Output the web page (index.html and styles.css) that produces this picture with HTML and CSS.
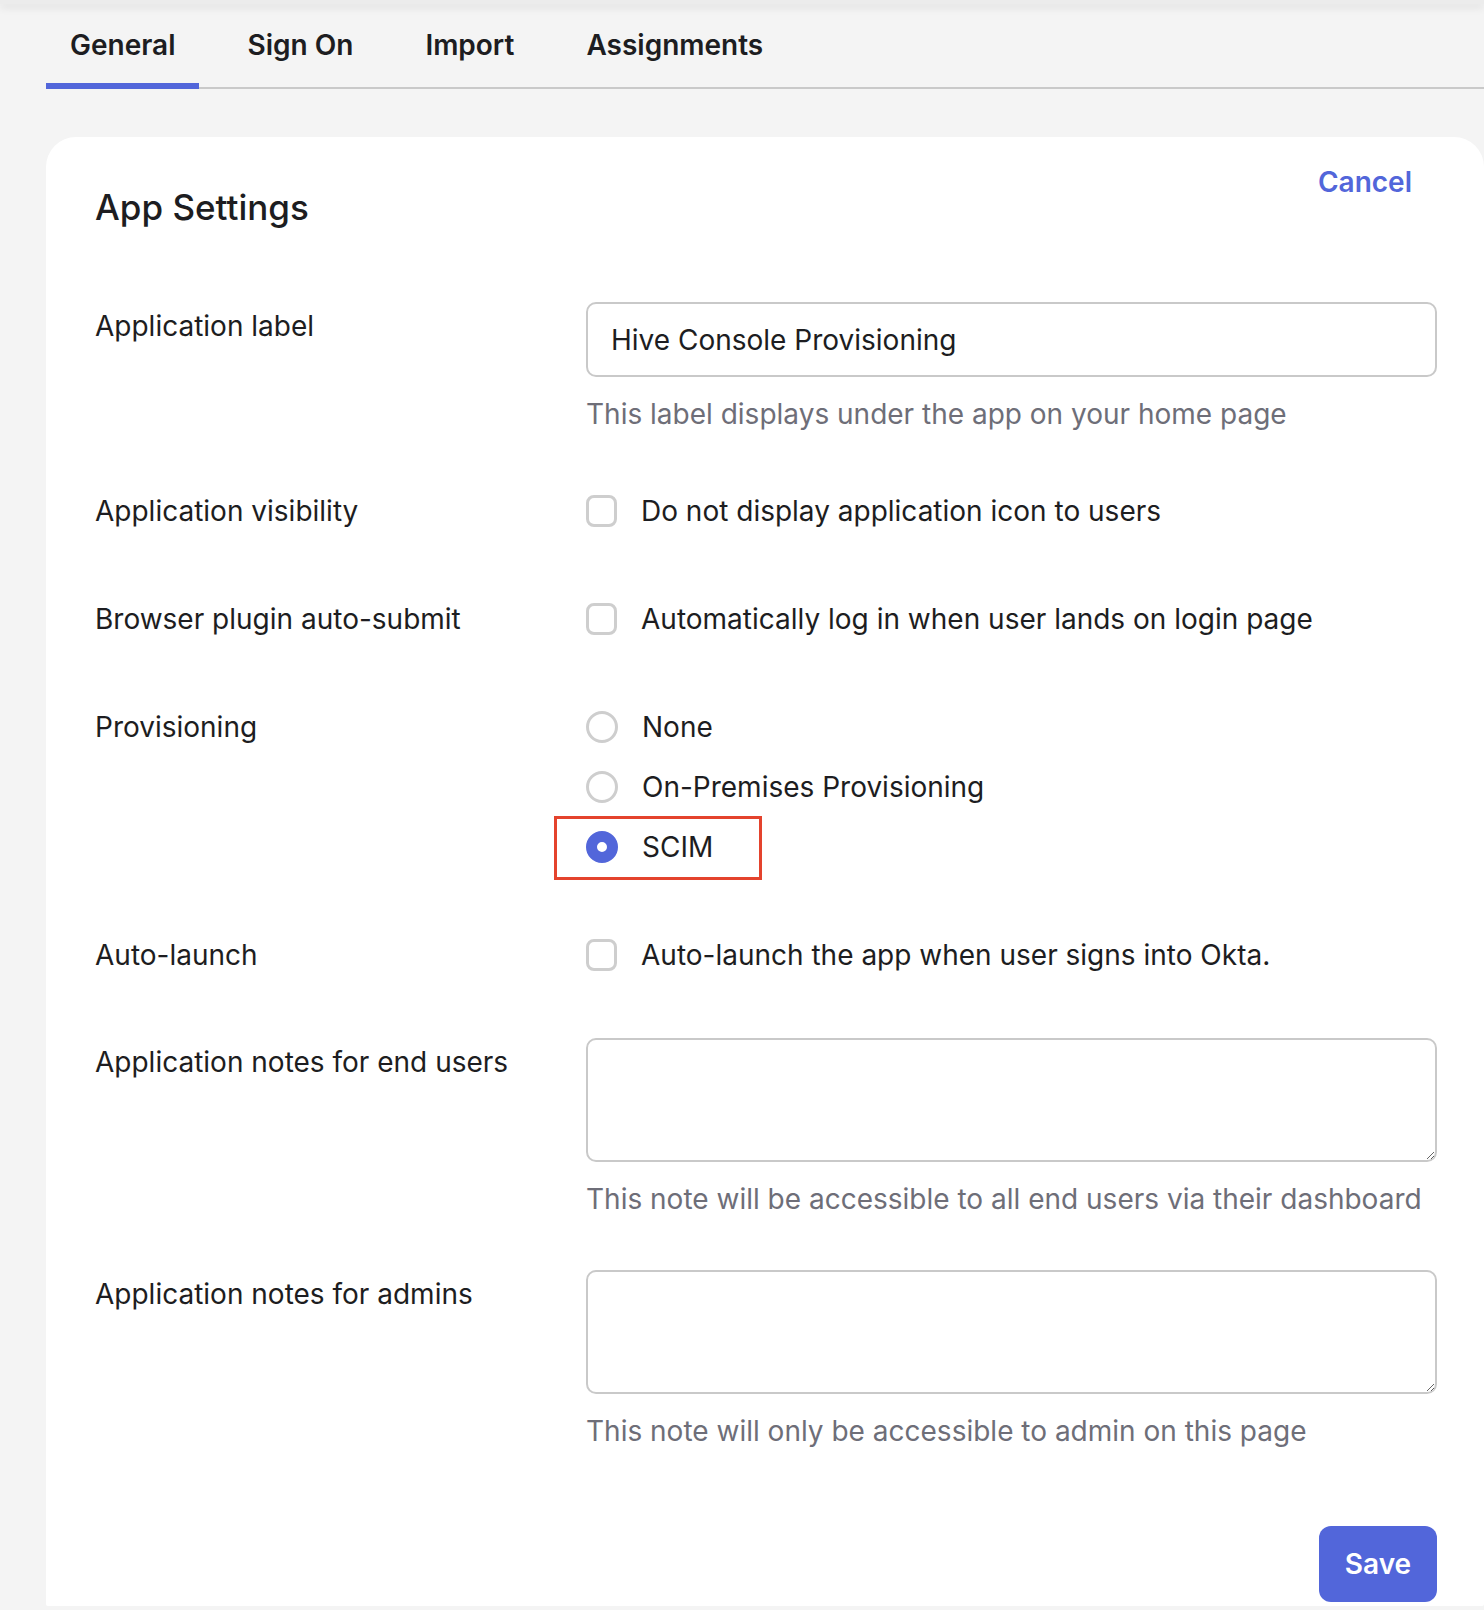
FILE: index.html
```html
<!DOCTYPE html>
<html>
<head>
  <meta charset="utf-8">
  <link rel="stylesheet" href="styles.css">
</head>
<body>
  <div class="topbar"></div>

  <!-- App tabs -->
  <nav class="tabs">
    <a class="tab active">General</a>
    <a class="tab">Sign On</a>
    <a class="tab">Import</a>
    <a class="tab">Assignments</a>
  </nav>

  <div class="card">
    <div class="card-header">
      <h2>App Settings</h2>
      <a class="link-cancel">Cancel</a>
    </div>

    <form class="settings-form">
      <div class="field with-help">
        <label class="field-label offset">Application label</label>
        <div class="field-control">
          <input class="text-input" type="text" value="Hive Console Provisioning">
          <p class="field-help">This label displays under the app on your home page</p>
        </div>
      </div>

      <div class="field">
        <span class="field-label">Application visibility</span>
        <div class="field-control">
          <label class="option"><span class="checkbox"></span>Do not display application icon to users</label>
        </div>
      </div>

      <div class="field">
        <span class="field-label">Browser plugin auto-submit</span>
        <div class="field-control">
          <label class="option"><span class="checkbox"></span>Automatically log in when user lands on login page</label>
        </div>
      </div>

      <div class="field">
        <span class="field-label">Provisioning</span>
        <div class="field-control options">
          <label class="option"><span class="radio"></span>None</label>
          <label class="option"><span class="radio"></span>On-Premises Provisioning</label>
          <label class="option highlight"><span class="radio checked"></span>SCIM</label>
        </div>
      </div>

      <div class="field">
        <span class="field-label">Auto-launch</span>
        <div class="field-control">
          <label class="option"><span class="checkbox"></span>Auto-launch the app when user signs into Okta.</label>
        </div>
      </div>

      <div class="field with-area with-help">
        <label class="field-label offset">Application notes for end users</label>
        <div class="field-control">
          <textarea class="text-area"></textarea>
          <p class="field-help">This note will be accessible to all end users via their dashboard</p>
        </div>
      </div>

      <div class="field with-area with-help">
        <label class="field-label offset">Application notes for admins</label>
        <div class="field-control">
          <textarea class="text-area"></textarea>
          <p class="field-help">This note will only be accessible to admin on this page</p>
        </div>
      </div>

      <div class="form-actions">
        <button class="btn-save" type="button">Save</button>
      </div>
    </form>
  </div>
</body>
</html>
```

FILE: styles.css
```css
body {
  margin: 0;
  background: #f4f4f4;
  font-family: Inter, "Noto Sans", sans-serif;
  color: #1d1d21;
}

.topbar {
  height: 4px;
  background: #ececec;
  box-shadow: 0 3px 8px rgba(0, 0, 0, 0.12);
}

/* Tabs */
.tabs {
  display: flex;
  gap: 24px;
  margin-left: 46px;
  border-bottom: 2px solid #c9c9c9;
}

.tab {
  padding: 21px 24px 18px;
  margin-bottom: -2px;
  border-bottom: 6px solid transparent;
  font-size: 28px;
  font-weight: 600;
  line-height: 40px;
  color: #1d1d21;
}

.tab.active {
  border-bottom-color: #5266da;
}

/* Card */
.card {
  margin: 48px 0 0 46px;
  padding: 25px 47px 4px 49px;
  background: white;
  border-radius: 30px 30px 2px 2px;
}

.card-header {
  display: flex;
  justify-content: space-between;
  align-items: flex-start;
}

.card-header h2 {
  margin: 21px 0 0 0;
  font-size: 35px;
  font-weight: 500;
  line-height: 48px;
}

.link-cancel {
  margin-right: 25px;
  font-size: 28px;
  font-weight: 600;
  line-height: 40px;
  color: #5266da;
  cursor: pointer;
}

/* Form */
.settings-form {
  margin-top: 71px;
  font-size: 28px;
  line-height: 40px;
}

.field {
  display: grid;
  grid-template-columns: 491px 1fr;
}

.field + .field {
  margin-top: 68px;
}

.field + .field.with-area {
  margin-top: 63px;
}

.field.with-help + .field {
  margin-top: 57px;
}

.field.with-area + .field.with-area {
  margin-top: 51px;
}

.field-label.offset {
  margin-top: 4px;
}

.field-help {
  margin: 17px 0 0 0;
  color: #6e6e78;
}

.text-input,
.text-area {
  display: block;
  width: 100%;
  box-sizing: border-box;
  border: 2px solid #c9c9c9;
  border-radius: 10px;
  font-family: inherit;
  font-size: 28px;
  color: #1d1d21;
  background: white;
}

.text-input {
  height: 75px;
  padding: 0 23px;
}

.text-area {
  height: 124px;
  padding: 12px 23px;
  resize: vertical;
}

.options {
  display: flex;
  flex-direction: column;
  gap: 20px;
}

.option {
  display: flex;
  align-items: center;
  gap: 24px;
  position: relative;
}

.checkbox,
.radio {
  flex: none;
  width: 32px;
  height: 32px;
  box-sizing: border-box;
  border: 3px solid #cecece;
  background: white;
}

.checkbox {
  width: 31px;
  border-radius: 8px;
}

.radio {
  border-radius: 50%;
}

.radio.checked {
  border: 11px solid #5266da;
}

/* callout box around the selected provisioning option */
.option.highlight::after {
  content: "";
  position: absolute;
  left: -32px;
  top: -11px;
  width: 208px;
  height: 64px;
  box-sizing: border-box;
  border: 3px solid #e4432d;
}

.form-actions {
  display: flex;
  justify-content: flex-end;
  margin-top: 75px;
}

.btn-save {
  width: 118px;
  height: 76px;
  border: none;
  border-radius: 12px;
  background: #5266da;
  color: white;
  font-family: inherit;
  font-size: 28px;
  font-weight: 600;
  cursor: pointer;
}
```
